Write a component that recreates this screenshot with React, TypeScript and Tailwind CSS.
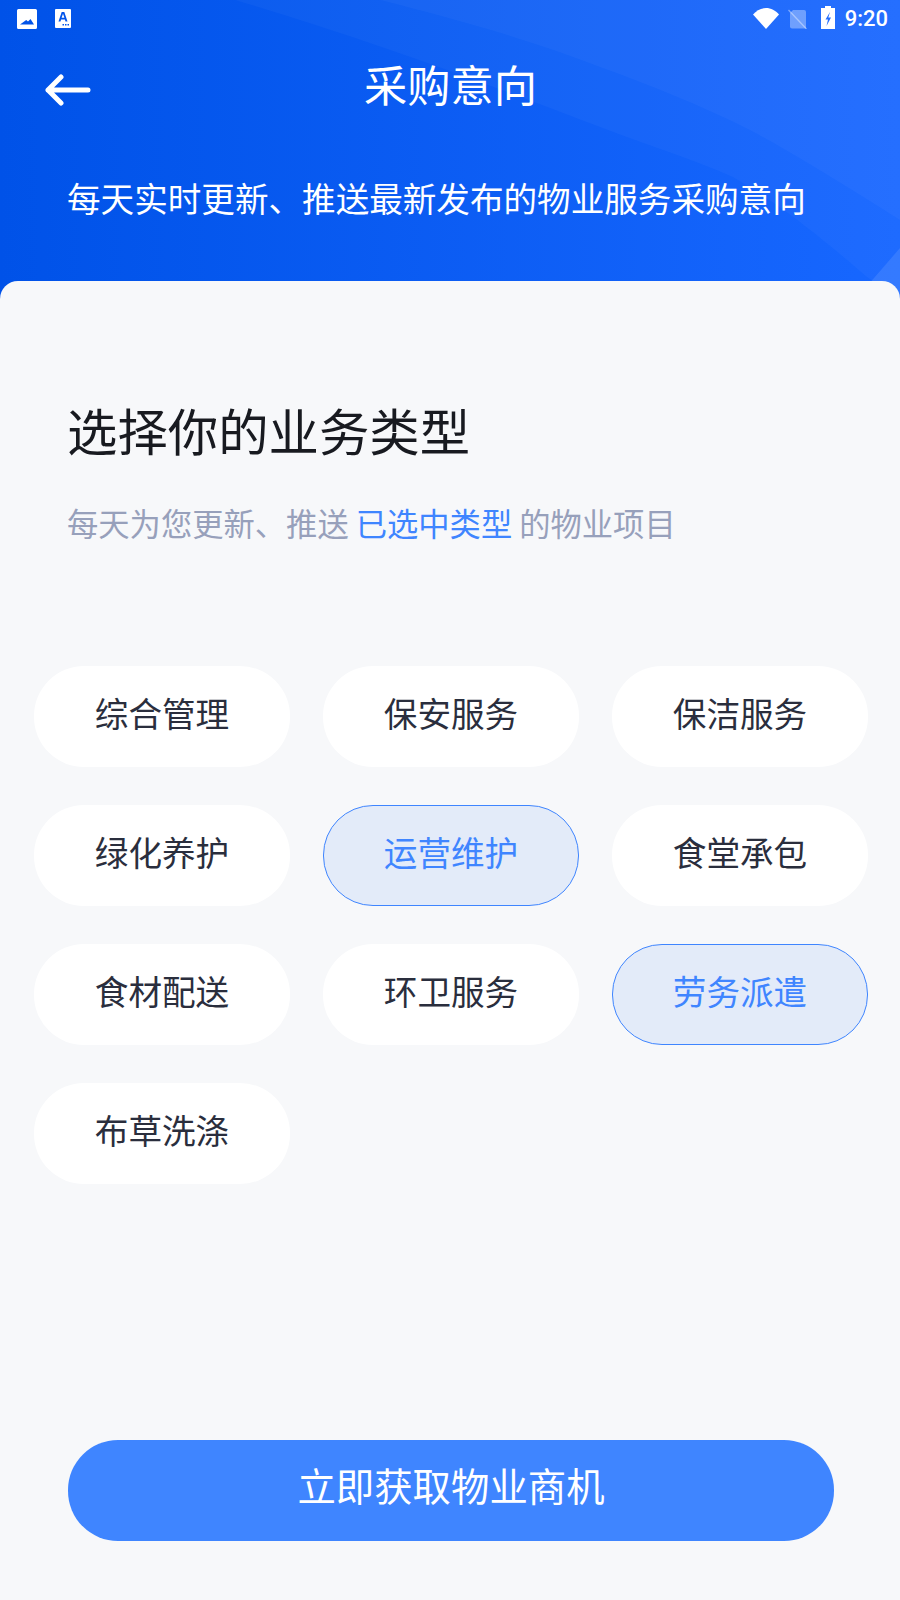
const items = [
  ["综合管理", false], ["保安服务", false], ["保洁服务", false],
  ["绿化养护", false], ["运营维护", true], ["食堂承包", false],
  ["食材配送", false], ["环卫服务", false], ["劳务派遣", true],
  ["布草洗涤", false],
] as const;

function Pill({ label, active }: { label: string; active: boolean }) {
  return (
    <div
      className={
        active
          ? "h-[101px] rounded-[50px] border border-[#3f85ff] bg-[#e3ebf9] text-[#3f85ff] text-[33.6px] flex items-center justify-center pb-[6px]"
          : "h-[101px] rounded-[50px] bg-white text-[#2a2e3d] text-[33.6px] flex items-center justify-center pb-[6px]"
      }
    >
      {label}
    </div>
  );
}

export default function App() {
  return (
    <div
      className="w-[900px] h-[1600px] overflow-hidden bg-[#f7f8fa] flex flex-col"
      style={{ fontFamily: '"Noto Sans CJK SC", "Noto Sans", sans-serif' }}
    >
      <header className="relative h-[299px] shrink-0 bg-gradient-to-r from-[#0052e8] to-[#1767ff] text-white">
        <svg className="absolute inset-0" width="900" height="299" viewBox="0 0 900 299" fill="none">
          <path d="M235 0 C 370 40 490 85 600 127 C 650 146 695 160 733 177 C 790 210 835 250 867 277 L900 299 L900 0 Z" fill="#ffffff" fillOpacity="0.03" />
          <path d="M380 0 C 460 20 530 40 600 67 C 650 85 700 105 750 130 C 805 160 860 195 900 220 L900 0 Z" fill="#ffffff" fillOpacity="0.03" />
          <path d="M868 285 L900 248 L900 299 L868 299 Z" fill="#ffffff" fillOpacity="0.1" />
        </svg>
        <div className="relative flex items-center justify-between h-[37px] pl-[17px] pr-[12px]">
          <div className="flex items-center gap-[18px]">
            <svg width="20" height="20" viewBox="0 0 20 20">
              <path fillRule="evenodd" d="M1.500 0h17A1.500 1.500 0 0 1 20 1.500v17a1.500 1.500 0 0 1-1.500 1.500h-17A1.500 1.500 0 0 1 0 18.500v-17A1.500 1.500 0 0 1 1.500 0zM3 15.500h14l-3.500-5.500-2.500 2.500-1.800-1.500-1.700 1.200z" fill="#fff" />
            </svg>
            <svg width="16" height="19" viewBox="0 0 16 19">
              <path fillRule="evenodd" d="M1 0h14a1 1 0 0 1 1 1v17a1 1 0 0 1-1 1H1a1 1 0 0 1-1-1V1a1 1 0 0 1 1-1zM6.700 3 3.500 12.500h2l.6-2h3.800l.6 2h2L9.300 3zM6.600 8.800 8 4.800l1.400 4zM7.500 15h1.500v1.500H7.500zM10 15h1.500v1.500H10zM12.500 15H14v1.500h-1.500z" fill="#fff" />
            </svg>
          </div>
          <div className="flex items-center">
            <svg width="26" height="21" viewBox="0 0 26 21" className="mr-[9px]">
              <path d="M0 6.500C3.500 2.500 8 0 13 0s9.500 2.500 13 6.500L13 21z" fill="#fff" />
            </svg>
            <svg width="19" height="20" viewBox="0 0 19 20" className="mr-[14px]">
              <path d="M5 1h11a2 2 0 0 1 2 2v16.500H4a2 2 0 0 1-2-2V4z" fill="#fff" fillOpacity="0.35" />
              <path d="M0.500 1l18 19" stroke="#fff" strokeOpacity="0.4" strokeWidth="1.300" />
            </svg>
            <svg width="14" height="23" viewBox="0 0 14 23" className="mr-[10px] mb-[3px]">
              <path fillRule="evenodd" d="M4 0h6v2h4v21H0V2h4zM9 6 4.500 13.500h2.500L5.500 20 10 11.500H7.300z" fill="#fff" />
            </svg>
            <span className="text-[22px] font-medium leading-none" style={{ fontFamily: "Roboto, sans-serif" }}>9:20</span>
          </div>
        </div>
        <div className="relative flex items-center justify-center h-[70px] mt-[12px]">
          <svg width="46" height="32" viewBox="0 0 46 32" fill="none" className="absolute left-[45px] top-[25px]">
            <path d="M16 3 3 16l13 13M3 16h40" stroke="#fff" strokeWidth="5" strokeLinecap="round" strokeLinejoin="round" />
          </svg>
          <h1 className="ml-px text-[43.2px] leading-none font-normal">采购意向</h1>
        </div>
        <p className="relative mt-[54px] pl-[67px] text-[33.6px] leading-[50px] whitespace-nowrap">每天实时更新、推送最新发布的物业服务采购意向</p>
      </header>

      <main className="flex-1 -mt-[18px] rounded-t-[18px] bg-[#f7f8fa] relative flex flex-col">
        <div className="pl-[68px] pt-[116px]">
          <h2 className="text-[50.4px] leading-[66px] -ml-px font-normal text-[#181a20]">选择你的业务类型</h2>
          <p className="mt-[38px] -ml-px text-[31.3px] leading-[44px] text-[#97a0bb]">
            每天为您更新、推送 <span className="text-[#3f85ff]">已选中类型</span> 的物业项目
          </p>
        </div>
        <div className="mt-[121px] pl-[34px] pr-[32px] grid grid-cols-3 gap-x-[33px] gap-y-[38px]">
          {items.map(([label, active]) => (
            <Pill key={label} label={label} active={active} />
          ))}
        </div>
        <button className="mt-auto mb-[59px] ml-[68px] mr-[66px] h-[101px] rounded-[50px] bg-[#3f85ff] text-white text-[38.4px] pb-[11px]">
          立即获取物业商机
        </button>
      </main>
    </div>
  );
}
